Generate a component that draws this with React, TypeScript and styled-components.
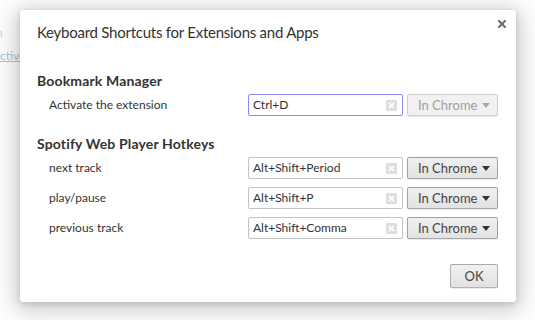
import React from 'react';
import styled, { createGlobalStyle } from 'styled-components';

const GlobalStyle = createGlobalStyle`
  html, body {
    margin: 0;
    padding: 0;
    background: #fff;
  }
  body {
    font-family: Lato, 'Open Sans', Arial, sans-serif;
    color: #333;
  }
`;

const Page = styled.div`
  position: relative;
  width: 535px;
  height: 320px;
  overflow: hidden;
  background: #fff;
`;

// faded page content that sits behind the dialog
const PageText = styled.div`
  padding-top: 25px;
  display: flex;
  flex-direction: column;
  align-items: flex-start;
  gap: 7px;
  font-size: 12px;
  line-height: 16px;
`;

const PageLine = styled.span<{ $shift: number; $link?: boolean }>`
  margin-left: ${({ $shift }) => $shift}px;
  color: ${({ $link }) => ($link ? '#b4bce6' : '#d4ccd9')};
  text-decoration: ${({ $link }) => ($link ? 'underline' : 'none')};
  white-space: nowrap;
`;

const Overlay = styled.div`
  position: absolute;
  inset: 0;
  padding: 10px 0 0 20px;
  box-sizing: border-box;
`;

const Dialog = styled.section`
  width: 496px;
  height: 292px;
  box-sizing: border-box;
  background: #fff;
  border-radius: 3px;
  box-shadow: 0 4px 23px 5px rgba(0, 0, 0, 0.2), 0 2px 6px rgba(0, 0, 0, 0.15);
  display: flex;
  flex-direction: column;
  padding: 0 18px 14px 17px;
`;

const Header = styled.header`
  display: flex;
  justify-content: space-between;
  align-items: flex-start;
  padding-top: 12px;
  margin-right: -8px;
`;

const Title = styled.h1`
  margin: 0;
  font-size: 15px;
  font-weight: 400;
  line-height: 20px;
  letter-spacing: -0.25px;
  color: #333;
`;

const CloseButton = styled.button`
  border: 0;
  background: none;
  padding: 0;
  margin-top: -2px;
  width: 8px;
  height: 8px;
  display: flex;
  cursor: pointer;
`;

const Section = styled.div<{ $gap: number }>`
  margin-top: ${({ $gap }) => $gap}px;
  display: flex;
  flex-direction: column;
`;

const SectionTitle = styled.h2`
  margin: 0 0 3px;
  font-size: 14px;
  font-weight: 700;
  line-height: 20px;
  letter-spacing: 0.15px;
  color: #333;
`;

const Rows = styled.div`
  display: grid;
  grid-template-columns: 1fr 155px 91px;
  column-gap: 4px;
  row-gap: 8px;
  align-items: center;
`;

const Label = styled.span`
  padding-left: 12px;
  font-size: 12px;
  line-height: 22px;
  color: #333;
`;

const ShortcutBox = styled.div<{ $focused?: boolean }>`
  height: 22px;
  box-sizing: border-box;
  border: 1px solid ${({ $focused }) => ($focused ? '#8b8bf2' : '#c4c4c4')};
  border-radius: 2px;
  background: #fff;
  display: flex;
  align-items: center;
  padding: 0 5px 0 4px;
  gap: 4px;
`;

const ShortcutText = styled.span`
  flex: 1;
  font-size: 12px;
  line-height: 20px;
  color: #333;
  white-space: nowrap;
`;

const ClearButton = styled.span`
  width: 11px;
  height: 11px;
  display: flex;
`;

const ScopeSelect = styled.div<{ $disabled?: boolean }>`
  height: 22px;
  box-sizing: border-box;
  border: 1px solid ${({ $disabled }) => ($disabled ? 'rgba(0,0,0,0.15)' : 'rgba(0,0,0,0.3)')};
  border-radius: 2px;
  background: ${({ $disabled }) =>
    $disabled ? '#f1f1f1' : 'linear-gradient(#f0f0f0, #e2e2e2)'};
  box-shadow: 0 1px 0 rgba(0, 0, 0, 0.08);
  display: flex;
  align-items: center;
  justify-content: space-between;
  padding: 0 7px 0 10px;
  font-size: 13px;
  line-height: 20px;
  color: ${({ $disabled }) => ($disabled ? '#a0a0a0' : '#444')};
`;

const Footer = styled.footer`
  margin-top: auto;
  display: flex;
  justify-content: flex-end;
`;

const OkButton = styled.button`
  width: 48px;
  height: 24px;
  box-sizing: border-box;
  border: 1px solid rgba(0, 0, 0, 0.25);
  border-radius: 2px;
  background: linear-gradient(#f0f0f0, #e2e2e2);
  box-shadow: 0 1px 0 rgba(0, 0, 0, 0.08);
  font-family: inherit;
  font-size: 13px;
  color: #444;
  padding: 0;
  cursor: pointer;
`;

const CloseIcon = () => (
  <svg width="8" height="8" viewBox="0 0 8 8" aria-hidden="true">
    <path d="M1 1l6 6M7 1L1 7" stroke="#6b6b6b" strokeWidth="2" strokeLinecap="square" />
  </svg>
);

const ClearIcon = () => (
  <svg width="11" height="11" viewBox="0 0 11 11" aria-hidden="true">
    <rect width="11" height="11" rx="1" fill="#dedede" />
    <path d="M3 3l5 5M8 3L3 8" stroke="#fff" strokeWidth="1.6" />
  </svg>
);

const ArrowIcon = ({ color }: { color: string }) => (
  <svg width="8" height="5" viewBox="0 0 8 5" aria-hidden="true">
    <path d="M0 0h8L4 5z" fill={color} />
  </svg>
);

type Shortcut = { label: string; keys: string; focused?: boolean; disabled?: boolean };

const sections: { title: string; gap: number; items: Shortcut[] }[] = [
  {
    title: 'Bookmark Manager',
    gap: 29,
    items: [{ label: 'Activate the extension', keys: 'Ctrl+D', focused: true, disabled: true }],
  },
  {
    title: 'Spotify Web Player Hotkeys',
    gap: 18,
    items: [
      { label: 'next track', keys: 'Alt+Shift+Period' },
      { label: 'play/pause', keys: 'Alt+Shift+P' },
      { label: 'previous track', keys: 'Alt+Shift+Comma' },
    ],
  },
];

const App: React.FC = () => (
  <Page>
    <GlobalStyle />
    <PageText>
      <PageLine $shift={-4}>n</PageLine>
      <PageLine $shift={-8} $link>
        Active
      </PageLine>
    </PageText>
    <Overlay>
      <Dialog aria-labelledby="shortcuts-title">
        <Header>
          <Title id="shortcuts-title">Keyboard Shortcuts for Extensions and Apps</Title>
          <CloseButton aria-label="Close">
            <CloseIcon />
          </CloseButton>
        </Header>
        {sections.map((section) => (
          <Section key={section.title} $gap={section.gap}>
            <SectionTitle>{section.title}</SectionTitle>
            <Rows>
              {section.items.map((item) => (
                <React.Fragment key={item.label}>
                  <Label>{item.label}</Label>
                  <ShortcutBox $focused={item.focused}>
                    <ShortcutText>{item.keys}</ShortcutText>
                    <ClearButton>
                      <ClearIcon />
                    </ClearButton>
                  </ShortcutBox>
                  <ScopeSelect $disabled={item.disabled}>
                    <span>In Chrome</span>
                    <ArrowIcon color={item.disabled ? '#a8a8a8' : '#333'} />
                  </ScopeSelect>
                </React.Fragment>
              ))}
            </Rows>
          </Section>
        ))}
        <Footer>
          <OkButton>OK</OkButton>
        </Footer>
      </Dialog>
    </Overlay>
  </Page>
);

export default App;
